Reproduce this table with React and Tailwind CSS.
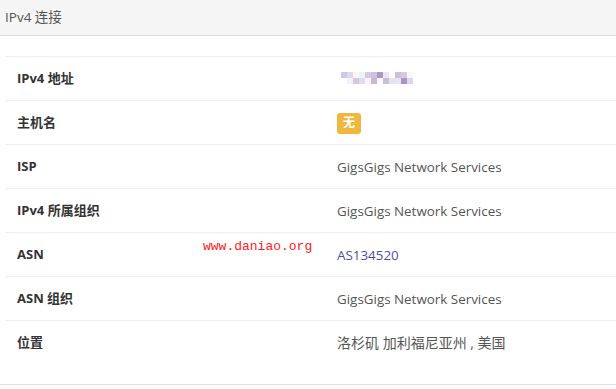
import React from "react";

const rows = [
  { label: "IPv4 地址", type: "mosaic" },
  { label: "主机名", type: "badge" },
  { label: "ISP", value: "GigsGigs Network Services" },
  { label: "IPv4 所属组织", value: "GigsGigs Network Services" },
  { label: "ASN", type: "link", value: "AS134520" },
  { label: "ASN 组织", value: "GigsGigs Network Services" },
  { label: "位置", type: "cjk", value: "洛杉矶 加利福尼亚州 , 美国" },
];

const m1 = ["#cfc8e2", "#ddd9ec", "#fbf4ec", "#e8f4f6", "#d6c8e2", "#cfc0dc", "#ab98c8", "#eee6ee", "#ffffff", "#c8c2dc", "#d6c8e0", "#f8f8fa"];
const m2 = ["#eef4fb", "#d5c8dc", "#e0dcee", "#fbf3f3", "#c8b8d8", "#fbfbfb", "#c7c0dc", "#e6e2ef", "#e8e4f0", "#a897c6", "#dcd8ec"];

function Mosaic() {
  return (
    <div className="flex flex-col mt-[-2px] ml-[4px]">
      <div className="flex">
        {m1.map((c, i) => (
          <div key={i} className="w-[6px] h-[6px]" style={{ background: c }} />
        ))}
      </div>
      <div className="flex ml-[6px]">
        {m2.map((c, i) => (
          <div key={i} className="w-[6px] h-[6px]" style={{ background: c }} />
        ))}
      </div>
    </div>
  );
}

export default function App() {
  return (
    <div className="w-[616px] h-[389px] bg-white relative" style={{ fontFamily: '"Open Sans", "Noto Sans CJK SC", sans-serif' }}>
      <div className="h-[36px] bg-[#f5f5f5] border-b border-[#dddddd] flex items-center pl-[5px] text-[13.5px] text-[#555555]">
        IPv4 连接
      </div>
      <div className="pl-[5px] pt-[20px]">
        {rows.map((r, i) => (
          <div key={i} className="h-[44px] border-t border-[#eeeeee] flex items-center text-[13px]">
            <div className="w-[332px] pl-[12px] font-bold text-[#333333]">{r.label}</div>
            <div className="flex-1 text-[#555555] text-[13.4px] pt-[1px]">
              {r.type === "mosaic" && <Mosaic />}
              {r.type === "badge" && (
                <span className="inline-flex items-center justify-center w-[24px] h-[21px] rounded-[3px] bg-[#f0b73e] text-white font-bold text-[12px]">
                  无
                </span>
              )}
              {r.type === "link" && <span className="text-[#4b4fa8]">{r.value}</span>}
              {r.type === "cjk" && <span className="text-[14px]">{r.value}</span>}
              {!r.type && r.value}
            </div>
          </div>
        ))}
      </div>
      <div className="border-t border-[#dddddd] mt-[20px]" />
      <div
        className="absolute left-[203px] top-[237px] text-[13px] text-[#ff2020]"
        style={{ fontFamily: '"Liberation Mono", "DejaVu Sans Mono", monospace' }}
      >
        www.daniao.org
      </div>
    </div>
  );
}
